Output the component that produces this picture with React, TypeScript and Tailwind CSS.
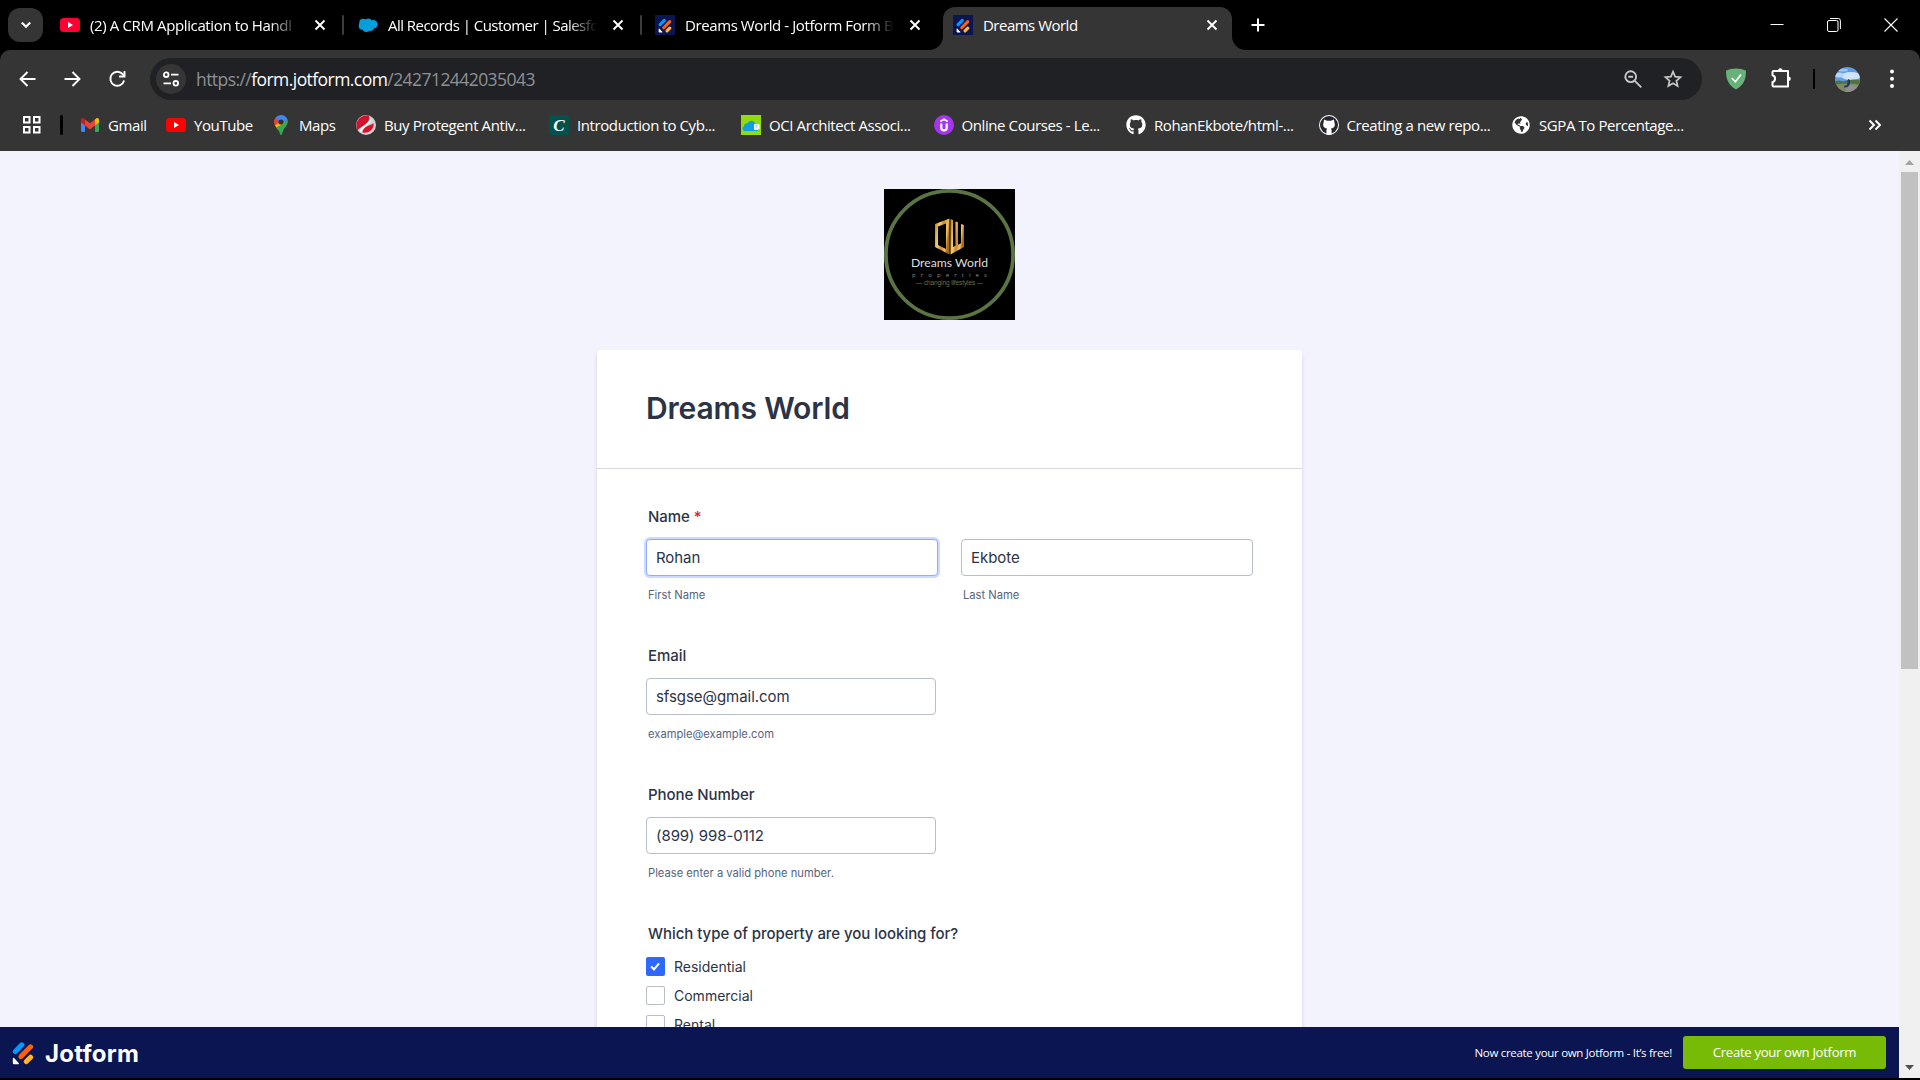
import type { ReactNode } from "react";
import { FaGithub, FaGlobeAmericas } from "react-icons/fa";

const chromeFont = "font-['Open_Sans',sans-serif]";

function YouTube() {
  return (
    <svg className="h-5 w-5 shrink-0" viewBox="0 0 20 20">
      <rect y="3" width="20" height="14" rx="3.5" fill="#ff0033" />
      <path d="M8 7v6l5-3z" fill="#fff" />
    </svg>
  );
}

function YouTubeClassic() {
  return (
    <svg className="h-5 w-5" viewBox="0 0 20 20">
      <rect y="3" width="20" height="14" rx="3.5" fill="#ff0000" />
      <path d="M8 7v6l5-3z" fill="#fff" />
    </svg>
  );
}

function Salesforce() {
  return (
    <svg className="h-5 w-5 shrink-0" viewBox="0 0 20 20">
      <g fill="#009edb">
        <circle cx="5.2" cy="7.6" r="3.9" />
        <circle cx="10.4" cy="6.7" r="3.3" />
        <circle cx="15.3" cy="9.2" r="4.3" />
        <circle cx="4.4" cy="11" r="3.7" />
        <circle cx="8.4" cy="13" r="4" />
        <circle cx="12.2" cy="12.2" r="3.8" />
      </g>
    </svg>
  );
}

function JotformMark({ className }: { className: string }) {
  return (
    <svg className={className} viewBox="0 0 22 24">
      <g strokeLinecap="round" strokeWidth="5" fill="none">
        <path d="M3.3 10.5 9.8 3.8" stroke="#0099ff" />
        <path d="M9 15.6 18.6 5.8" stroke="#ff6100" />
        <path d="M14.3 20.5 18.6 16.2" stroke="#ffb629" />
      </g>
      <path d="M.8 17.6c0-.7.8-1 1.3-.5l4.6 4.8c.5.5.1 1.3-.6 1.3H2a1.2 1.2 0 0 1-1.2-1.2z" fill="#fff" />
    </svg>
  );
}

function JotformTile() {
  return (
    <div className="flex h-5 w-5 shrink-0 items-center justify-center bg-[#0a1551]">
      <JotformMark className="h-[15px] w-[14px]" />
    </div>
  );
}

function Gmail() {
  return (
    <svg className="h-5 w-5" viewBox="0 0 20 20">
      <path d="M1 5v10.500A1.500 1.500 0 0 0 2.500 17H5V8.500z" fill="#4285f4" />
      <path d="M19 5v10.500A1.500 1.500 0 0 1 17.500 17H15V8.500z" fill="#34a853" />
      <path d="M15 4.400 16.400 3.300C17.500 2.500 19 3.400 19 5v2.200l-4 3.300z" fill="#fbbc04" />
      <path d="M5 10.500V4.400L10 8.300l5-3.900v6.100L10 14.500z" fill="#ea4335" />
      <path d="M1 5C1 3.400 2.500 2.500 3.600 3.300L5 4.400v6.100L1 7.200z" fill="#c5221f" />
    </svg>
  );
}

function MapsPin() {
  return (
    <svg className="h-5 w-5" viewBox="0 0 20 20">
      <path d="M3 7c0 2.200 1 3.800 2.200 5.300L10 7 4.600 2.500A7 7 0 0 0 3 7z" fill="#ea4335" />
      <path d="m4.200 10.600 8.300-7.100 2 6L7.700 15.500A16 16 0 0 1 4.200 10.600z" fill="#fbbc04" />
      <path d="M8 15.900c-1-1.600-2-2.300-2.800-3.600l7.100-3.200 4.200-5c1.700 4.900-2.500 7.700-4.100 11.200C11.500 17 11.200 20 10 20s-1.300-2.700-2-4.100z" fill="#34a853" />
      <path d="M10 0c3 0 5.400 1.700 6.400 4.200l-3.800 4L8 6.500 4.600 2.500A7 7 0 0 1 10 0z" fill="#4285f4" />
      <circle cx="10" cy="7" r="2.600" fill="#303134" />
    </svg>
  );
}

function Protegent() {
  return (
    <svg className="h-5 w-5" viewBox="0 0 20 20">
      <circle cx="10" cy="10" r="10" fill="#d0d0d4" />
      <path d="M1.500 15.500C-2 8 3 0 12.500.3 15 4 12 8 8 10.500c-2.500 1.500-5 2.500-6.500 5z" fill="#d3122c" />
      <path d="M17.500 8C18.500 14 13 19 6.500 17.500c0-3 2-5 5-6.500 2.500-1 4.500-1.500 6-3z" fill="#d8122c" />
      <path d="M4.500 16.500c1-6 8-5 10-12" stroke="#fff" strokeWidth="1.800" fill="none" />
    </svg>
  );
}

function Coursera() {
  return (
    <div className="flex h-5 w-5 items-center justify-center rounded-[2px] bg-[#03514a] font-['Liberation_Serif',serif] text-[17px] leading-none font-bold text-white italic">
      C
    </div>
  );
}

function OracleCloud() {
  return (
    <svg className="h-5 w-5" viewBox="0 0 20 20">
      <rect width="20" height="20" fill="#92dd09" />
      <path d="M3.500 16a2.500 2.500 0 0 1-.5-4.800C3 9 5 8 6.500 8.600 7.500 5 13 4.500 14.200 8.500L17 10v6z" fill="#0d9fe0" />
      <path d="M13 9.300h5.500V14h-1.300v1H13z" fill="#fff" />
      <path d="M14.500 11h2M14.500 13h1" stroke="#0d9fe0" strokeWidth=".8" />
    </svg>
  );
}

function Udemy() {
  return (
    <svg className="h-5 w-5" viewBox="0 0 20 20">
      <circle cx="10" cy="10" r="10" fill="#a435f0" />
      <path d="m6.300 6.500 3.700-2.300 3.700 2.300" stroke="#fff" strokeWidth="1.700" fill="none" />
      <path d="M7.300 8.500v4.200a2.700 2.700 0 0 0 5.400 0V8.500" stroke="#fff" strokeWidth="2.200" fill="none" />
    </svg>
  );
}

function GithubDark() {
  return (
    <svg className="h-5 w-5" viewBox="0 0 20 20">
      <circle cx="10" cy="10" r="10" fill="#fff" />
      <circle cx="10" cy="10" r="9" fill="#24292f" />
      <path d="M5 4.500 8 5.700h4l3-1.200.4 3c1.300 3.500-.3 5.600-3.400 6.100l.6 1.600v4.500H7.400v-4.500L8 13.600c-3.100-.5-4.700-2.600-3.400-6.100z" fill="#fff" />
    </svg>
  );
}

function TabClose() {
  return (
    <svg className="h-5 w-5 shrink-0" viewBox="0 0 20 20" fill="none" stroke="#fff" strokeWidth="1.900">
      <path d="m5.500 5.500 9 9M14.500 5.500l-9 9" />
    </svg>
  );
}

function Tab({ icon, title, tracking, separator }: { icon: ReactNode; title: string; tracking: string; separator?: boolean }) {
  return (
    <div className="flex h-[50px] w-[299px] shrink-0 items-center pl-[15px]">
      {icon}
      <div className={`ml-[10px] w-[209px] shrink-0 mask-r-from-[86%] mask-r-to-100% text-[15px] whitespace-nowrap ${tracking}`}>
        {title}
      </div>
      <div className="ml-[11px] shrink-0">
        <TabClose />
      </div>
      {separator && <div className="ml-[12px] h-5 w-[2px] shrink-0 rounded-full bg-[#3c3c3c]" />}
    </div>
  );
}

function TabStrip() {
  return (
    <div className="flex h-[50px] items-center bg-black">
      <div className="ml-2 flex h-[34px] w-[35px] items-center justify-center rounded-[12px] bg-[#353535]">
        <svg className="h-4 w-4" viewBox="0 0 16 16" fill="none" stroke="#fff" strokeWidth="2.200">
          <path d="m3.800 5.500 4.200 4.300 4.200-4.300" />
        </svg>
      </div>
      <div className="ml-[2px] flex w-[892px] gap-x-[-1px]">
        <div className="w-[298px] shrink-0">
          <Tab icon={<YouTube />} title="(2) A CRM Application to Handl" tracking="tracking-[-0.025em]" separator />
        </div>
        <div className="w-[297px] shrink-0">
          <Tab icon={<Salesforce />} title="All Records | Customer | Salesfo" tracking="tracking-[-0.036em]" separator />
        </div>
        <div className="w-[297px] shrink-0">
          <Tab icon={<JotformTile />} title="Dreams World - Jotform Form B" tracking="tracking-[-0.027em]" />
        </div>
      </div>
      <div className="relative ml-[6px] flex h-[43px] w-[289px] shrink-0 self-end rounded-t-[12px] bg-[#353535]">
        <svg className="absolute bottom-0 -left-[14px] h-[14px] w-[14px]" viewBox="0 0 14 14">
          <path d="M14 0v14H0A14 14 0 0 0 14 0z" fill="#353535" />
        </svg>
        <svg className="absolute -right-[14px] bottom-0 h-[14px] w-[14px]" viewBox="0 0 14 14">
          <path d="M0 0v14h14A14 14 0 0 1 0 0z" fill="#353535" />
        </svg>
        <div className="flex h-9 w-full items-center pl-[10px]">
          <JotformTile />
          <div className="ml-[10px] flex-1 text-[15px] tracking-[-0.034em]">Dreams World</div>
          <div className="mr-[10px]">
            <TabClose />
          </div>
        </div>
      </div>
      <svg className="ml-4 h-5 w-5" viewBox="0 0 20 20" stroke="#fff" strokeWidth="2">
        <path d="M10 3.500v13M3.500 10h13" />
      </svg>
      <div className="mr-[22px] ml-auto flex items-center gap-[43px]">
        <svg className="h-[14px] w-[14px]" viewBox="0 0 14 14" stroke="#fff">
          <path d="M.5 6.500h13" />
        </svg>
        <svg className="h-[14px] w-[14px]" viewBox="0 0 14 14" fill="none" stroke="#fff">
          <rect x=".5" y="2.500" width="10.500" height="11" rx="1.500" />
          <path d="M3 .5h8.200a2.200 2.200 0 0 1 2.200 2.200V11" />
        </svg>
        <svg className="h-[14px] w-[14px]" viewBox="0 0 14 14" stroke="#fff" strokeWidth="1.100">
          <path d="m.5.500 13 13M13.500.500l-13 13" />
        </svg>
      </div>
    </div>
  );
}

function AddressBar() {
  return (
    <div className="flex h-[58px] items-center">
      <div className="ml-[17px] flex items-center gap-[25px]">
        <svg className="h-5 w-5" viewBox="0 0 20 20" fill="none" stroke="#fff" strokeWidth="1.900">
          <path d="M18.500 10H3.500M10.500 3l-7 7 7 7" />
        </svg>
        <svg className="h-5 w-5" viewBox="0 0 20 20" fill="none" stroke="#fff" strokeWidth="1.900">
          <path d="M2.500 10h15M10.500 3l7 7-7 7" />
        </svg>
        <svg className="h-5 w-5" viewBox="0 0 20 20" fill="none" stroke="#fff" strokeWidth="1.900">
          <path d="M17.100 11.500A7 7 0 1 1 15.500 5l2 2.200" />
          <path d="M17.500 2v5.500H12" />
        </svg>
      </div>
      <div className="ml-[23px] flex h-[42px] w-[1552px] items-center rounded-full bg-[#202124]">
        <div className="ml-[6px] flex h-[30px] w-[30px] items-center justify-center rounded-full bg-[#353535]">
          <svg className="h-[18px] w-[18px]" viewBox="0 0 18 18" fill="none" stroke="#fff" strokeWidth="1.800">
            <circle cx="4.200" cy="4.700" r="2.300" />
            <path d="M9 4.700h7.500M1.500 13.300H9" />
            <circle cx="13.800" cy="13.300" r="2.300" />
          </svg>
        </div>
        <div className="ml-[10px] text-[17.500px] tracking-[-0.032em] text-[#8e9195]">
          https://<span className="text-white">form.jotform.com</span>/242712442035043
        </div>
        <div className="mr-[19px] ml-auto flex gap-5">
          <svg className="h-5 w-5" viewBox="0 0 20 20" fill="none" stroke="#c7c7c7" strokeWidth="1.900">
            <circle cx="7.700" cy="7.700" r="5.400" />
            <path d="m11.800 11.800 6.500 6.500M5.300 7.700h4.800" />
          </svg>
          <svg className="h-5 w-5" viewBox="0 0 20 20" fill="none" stroke="#c7c7c7" strokeWidth="1.700">
            <path d="m10 2.700 2.100 5 5.400.5-4.100 3.600 1.200 5.300L10 14.300l-4.600 2.800 1.200-5.300-4.100-3.600 5.400-.5z" />
          </svg>
        </div>
      </div>
      <svg className="ml-[22.500px] h-[22px] w-[22px]" viewBox="0 0 22 22">
        <path d="M11 .5c3.500 0 7 .8 10 2.200 0 8-2 14.300-10 18.800C3 17 1 10.700 1 2.700 4 1.300 7.500.5 11 .5z" fill="#67b279" />
        <path d="m6.800 10 3.600 3.800 5.600-7.300" fill="none" stroke="#fff" strokeWidth="1.700" />
      </svg>
      <svg className="mb-[2px] ml-[22.500px] h-6 w-6" viewBox="0 0 24 24">
        <path
          d="M4.500 5h14.500v15.500H4.500a1 1 0 0 1-1-1v-3.300a3.600 3.600 0 0 0 0-6.900V6a1 1 0 0 1 1-1z"
          fill="none"
          stroke="#fff"
          strokeWidth="2"
          strokeLinejoin="round"
        />
        <path d="M9 4.500a2.300 2.300 0 0 1 4.600 0zM19.500 10.400a2.300 2.300 0 0 1 0 4.600z" fill="#fff" />
      </svg>
      <div className="ml-[20px] h-5 w-[2px] bg-black" />
      <svg className="ml-5 h-[25px] w-[25px] rounded-full" viewBox="0 0 25 25">
        <rect width="25" height="15" fill="#5f9ce8" />
        <ellipse cx="16" cy="9" rx="10" ry="4" fill="#cfe3fa" />
        <ellipse cx="4" cy="8" rx="5" ry="2.500" fill="#b8d5f7" />
        <ellipse cx="8" cy="3" rx="5" ry="1.500" fill="#9cc4f4" />
        <rect y="14.500" width="25" height="11" fill="#7e8b62" />
        <path d="M0 14.500c3-1.500 5-1 8 0 5-1.500 12-3 17-1v4c-8-1.500-17-1-25 0z" fill="#4d7340" />
        <path d="m10 25 3-8 12 3v5z" fill="#8f8f8b" />
        <path d="m13 12 2 1v4l-2 3-4 .5V19l3-1z" fill="#203a69" />
      </svg>
      <svg className="ml-[22px] h-[22px] w-5" viewBox="0 0 20 22" fill="#fff">
        <circle cx="10" cy="3.500" r="2" />
        <circle cx="10" cy="10.700" r="2" />
        <circle cx="10" cy="17.900" r="2" />
      </svg>
    </div>
  );
}

function Bookmark({ icon, label, width }: { icon: ReactNode; label: string; width: string }) {
  return (
    <div className={`flex shrink-0 items-center gap-2 ${width}`}>
      {icon}
      <span className="text-[15px] tracking-[-0.027em] whitespace-nowrap">{label}</span>
    </div>
  );
}

function BookmarksBar() {
  return (
    <div className="flex h-[43px] items-center pb-[9px]">
      <div className="w-[80px] shrink-0 pl-[22px]">
        <div className="flex items-center">
          <svg className="h-5 w-5" viewBox="0 0 20 20" fill="none" stroke="#fff" strokeWidth="2">
            <path d="M2 2h5.500v5.500H2zM12 2h5.500v5.500H12zM2 12h5.500v5.500H2zM12 12h5.500v5.500H12z" />
          </svg>
          <div className="ml-[18px] h-5 w-[2.500px] rounded-full bg-black" />
        </div>
      </div>
      <Bookmark icon={<Gmail />} label="Gmail" width="w-[86px]" />
      <Bookmark icon={<YouTubeClassic />} label="YouTube" width="w-[105px]" />
      <Bookmark icon={<MapsPin />} label="Maps" width="w-[85px]" />
      <Bookmark icon={<Protegent />} label="Buy Protegent Antiv..." width="w-[193px]" />
      <Bookmark icon={<Coursera />} label="Introduction to Cyb..." width="w-[192px]" />
      <Bookmark icon={<OracleCloud />} label="OCI Architect Associ..." width="w-[192.500px]" />
      <Bookmark icon={<Udemy />} label="Online Courses - Le..." width="w-[192.500px]" />
      <Bookmark icon={<FaGithub className="h-5 w-5" />} label="RohanEkbote/html-..." width="w-[192.500px]" />
      <Bookmark icon={<GithubDark />} label="Creating a new repo..." width="w-[192.500px]" />
      <Bookmark icon={<FaGlobeAmericas className="h-5 w-5 p-px" />} label="SGPA To Percentage..." width="w-[192px]" />
      <svg className="mr-[35px] ml-auto h-5 w-5" viewBox="0 0 20 20" fill="none" stroke="#fff" strokeWidth="1.900">
        <path d="m4.500 5.500 4.500 4.500-4.500 4.500M10.500 5.500l4.500 4.500-4.500 4.500" />
      </svg>
    </div>
  );
}

function CompanyLogo() {
  return (
    <div className="relative mx-auto h-[131px] w-[131px] bg-black">
      <svg className="absolute inset-0 h-full w-full" viewBox="0 0 131 131">
        <defs>
          <linearGradient id="gold" x1="0" x2="1" y1="0" y2="0.300">
            <stop offset="0" stopColor="#b8771d" />
            <stop offset="0.350" stopColor="#f6cf75" />
            <stop offset="0.600" stopColor="#c98a2b" />
            <stop offset="0.850" stopColor="#f0c469" />
            <stop offset="1" stopColor="#a9681a" />
          </linearGradient>
        </defs>
        <circle cx="65.500" cy="65.500" r="63.600" fill="none" stroke="#5b7443" strokeWidth="3.800" />
        <path fill="url(#gold)" fillRule="evenodd" d="M51 35 65.500 29.500V65.500L51 58zM54 37.500v18.500l8 4V34.500z" />
        <path fill="url(#gold)" d="M66.500 30 69 31v27l2.500-1.300V32.500l2.500.8v22.500l3-1.500V35l3 1v22L66.500 65.500z" />
      </svg>
      <div className="relative flex flex-col items-center whitespace-nowrap">
        <div className="mt-[67px] font-['Lato',sans-serif] text-[12.200px] leading-[14px] text-[#dedede]">Dreams World</div>
        <div className="mt-[1px] ml-[5px] font-['Open_Sans',sans-serif] text-[6px] leading-[8px] tracking-[5.100px] text-[#8c8c8c]">properties</div>
        <div className="font-['Liberation_Sans_Narrow','Liberation_Sans',sans-serif] text-[6.500px] leading-[8px] tracking-[-0.100px] text-[#64704f]">— changing lifestyles —</div>
      </div>
    </div>
  );
}

function TextInput({ value, focused, width }: { value: string; focused?: boolean; width: string }) {
  return (
    <div
      className={`mt-[11px] flex h-[37px] items-center rounded-[4px] border bg-white pt-[2px] pl-[9px] text-[15px] tracking-[-0.004em] text-[#2c3345] ${width} ${
        focused ? "border-[#8fabff] shadow-[0_0_0_2px_#cddaff]" : "border-[#b8bdc9]"
      }`}
    >
      {value}
    </div>
  );
}

function FieldLabel({ children }: { children: ReactNode }) {
  return <div className="ml-[2px] h-[22px] text-[15px] leading-[22px] font-medium tracking-[-0.003em] text-[#2c3345]">{children}</div>;
}

function Hint({ children }: { children: ReactNode }) {
  return <div className="mt-[12px] ml-[2px] h-[14px] text-[11.200px] leading-[14px] text-[#57647e]">{children}</div>;
}

function Option({ label, checked }: { label: string; checked?: boolean }) {
  return (
    <div className="flex h-[29px] items-center">
      {checked ? (
        <div className="flex h-[19px] w-[19px] items-center justify-center rounded-[2px] bg-[#2e69ff]">
          <svg className="mr-px h-[11px] w-[11px]" viewBox="0 0 11 11" fill="none" stroke="#fff" strokeWidth="2">
            <path d="m1.200 5.500 2.800 3 5-6.200" />
          </svg>
        </div>
      ) : (
        <div className="h-[19px] w-[19px] rounded-[2px] border border-[#b8bdc9]" />
      )}
      <span className="ml-[9px] text-[14px] text-[#2c3345]">{label}</span>
    </div>
  );
}

function FormCard() {
  return (
    <div className="mx-auto mt-[30px] h-[900px] w-[705px] rounded-[4px] bg-white shadow-[0_4px_4px_rgba(87,100,126,0.210)]">
      <div className="flex h-[119px] items-center border-b border-[#d7d8e1] pb-[2px] pl-[49px]">
        <h1 className="text-[30px] font-semibold tracking-[-0.005em] text-[#2c3345]">Dreams World</h1>
      </div>
      <div className="pl-[49px]">
        <div className="flex h-[139px] gap-[23px] pt-[37px]">
          <div className="w-[292px]">
            <FieldLabel>
              Name <span className="text-[#e0202b]">*</span>
            </FieldLabel>
            <TextInput value="Rohan" focused width="w-[292px]" />
            <Hint>First Name</Hint>
          </div>
          <div>
            <div className="h-[22px]" />
            <TextInput value="Ekbote" width="w-[292px]" />
            <Hint>Last Name</Hint>
          </div>
        </div>
        <div className="h-[139px] pt-[37px]">
          <FieldLabel>Email</FieldLabel>
          <TextInput value="sfsgse@gmail.com" width="w-[290px]" />
          <Hint>example@example.com</Hint>
        </div>
        <div className="h-[139px] pt-[37px]">
          <FieldLabel>Phone Number</FieldLabel>
          <TextInput value="(899) 998-0112" width="w-[290px]" />
          <Hint>Please enter a valid phone number.</Hint>
        </div>
        <div className="pt-[37px]">
          <FieldLabel>Which type of property are you looking for?</FieldLabel>
          <div className="mt-[7px]">
            <Option label="Residential" checked />
            <Option label="Commercial" />
            <Option label="Rental" />
          </div>
        </div>
      </div>
    </div>
  );
}

function Footer() {
  return (
    <div className="flex h-[51px] shrink-0 items-center bg-[#0a1551] text-white">
      <JotformMark className="ml-3 h-6 w-[22px]" />
      <div className="mt-[2px] ml-[11px] font-['Inter',sans-serif] text-[24px] font-bold tracking-[0.010em]">Jotform</div>
      <div className={`ml-auto text-[11.500px] tracking-[-0.026em] ${chromeFont}`}>Now create your own Jotform - It’s free!</div>
      <div className={`mr-[13px] ml-[11px] flex h-[33px] w-[203px] items-center justify-center rounded-[3px] bg-[#78bb07] text-[13.200px] tracking-[-0.026em] ${chromeFont}`}>
        Create your own Jotform
      </div>
    </div>
  );
}

function Scrollbar() {
  return (
    <div className="flex w-[21px] shrink-0 flex-col items-center bg-[#f0f0f0]">
      <svg className="h-[21px] w-[21px]" viewBox="0 0 21 21">
        <path d="M6 14h9l-4.500-5z" fill="#a3a3a3" />
      </svg>
      <div className="h-[497px] w-[17px] bg-[#c1c1c1]" />
      <svg className="mt-auto h-[21px] w-[21px]" viewBox="0 0 21 21">
        <path d="M6 8h9l-4.500 5z" fill="#505050" />
      </svg>
    </div>
  );
}

export default function App() {
  return (
    <div className="flex h-[1080px] w-[1920px] flex-col overflow-hidden bg-black">
      <div className={`shrink-0 text-white ${chromeFont}`}>
        <TabStrip />
        <div className="h-[101px] rounded-t-[10px] bg-[#353535]">
          <AddressBar />
          <BookmarksBar />
        </div>
      </div>
      <div className="flex h-[927px] shrink-0 font-['Inter',sans-serif]">
        <div className="flex w-[1899px] flex-col bg-[#f3f3fe]">
          <div className="h-[876px] overflow-hidden pt-[38px]">
            <CompanyLogo />
            <FormCard />
          </div>
          <Footer />
        </div>
        <Scrollbar />
      </div>
    </div>
  );
}
